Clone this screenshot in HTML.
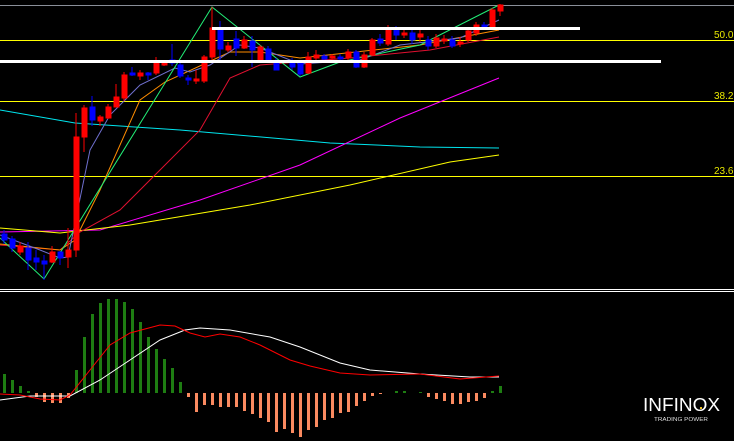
<!DOCTYPE html>
<html><head><meta charset="utf-8"><style>
html,body{margin:0;padding:0;background:#000;width:734px;height:441px;overflow:hidden}
svg{display:block}
</style></head><body>
<svg width="734" height="441" viewBox="0 0 734 441" xmlns="http://www.w3.org/2000/svg" shape-rendering="crispEdges">
<rect width="734" height="441" fill="#000"/>
<line x1="0" y1="5.5" x2="734" y2="5.5" stroke="#8a8f99" stroke-width="1"/>
<!-- fib lines -->
<g stroke="#ffff00" stroke-width="1">
<line x1="0" y1="40.5" x2="734" y2="40.5"/>
<line x1="0" y1="101.5" x2="734" y2="101.5"/>
<line x1="0" y1="176.5" x2="734" y2="176.5"/>
</g>
<g fill="#e8e800" font-family="Liberation Sans, sans-serif" font-size="10">
<text x="714" y="38">50.0</text>
<text x="714" y="99">38.2</text>
<text x="714" y="174">23.6</text>
</g>
<!-- MAs -->
<g fill="none" stroke-width="1" shape-rendering="auto">
<polyline stroke="#00e5ee" points="0,110 75,123 180,130 330,143 420,147 499,148"/>
<polyline stroke="#ff00ff" points="0,232 100,230 200,200 300,165 400,118 499,78"/>
<polyline stroke="#ffff00" points="0,228 60,233 130,225 250,205 350,185 450,162 499,155"/>
<polyline stroke="#e01030" points="0,245 60,250 80,232 120,210 160,170 200,130 230,78 260,65 350,58 430,50 499,37"/>
<polyline stroke="#ff8c00" points="0,244 60,250 75,240 100,190 140,100 165,82 230,52 260,52 300,58 420,45 499,30"/>
<polyline stroke="#7070d0" points="0,235 40,250 60,258 68,257 90,150 110,115 140,85 175,68 190,72 210,65 240,45 260,48 300,64 360,60 400,45 460,38 499,20"/>
<polyline stroke="#22ee77" points="0,238 44,279 212,7 300,77 340,62 420,45 499,5"/>
</g>
<!-- candles -->
<g stroke-width="1">
<g stroke="#0000ff" fill="#0000ff">
<line x1="4" y1="230" x2="4" y2="244"/><rect x="2" y="234" width="5" height="6"/>
<line x1="12" y1="236" x2="12" y2="252"/><rect x="10" y="239" width="5" height="9"/>
<line x1="28" y1="242" x2="28" y2="270"/><rect x="26" y="248" width="5" height="12"/>
<line x1="36" y1="250" x2="36" y2="270"/><rect x="34" y="258" width="5" height="4"/>
<line x1="44" y1="255" x2="44" y2="280"/><rect x="42" y="261" width="5" height="3"/>
<line x1="60" y1="251" x2="60" y2="265"/><rect x="58" y="252" width="5" height="6"/>
<line x1="92" y1="96" x2="92" y2="126"/><rect x="90" y="107" width="5" height="13"/>
<line x1="132" y1="67" x2="132" y2="76"/><rect x="130" y="73" width="5" height="2"/>
<line x1="148" y1="72" x2="148" y2="80"/><rect x="146" y="73" width="5" height="2"/>
<line x1="172" y1="44" x2="172" y2="66"/><rect x="170" y="60" width="5" height="3"/>
<line x1="180" y1="62" x2="180" y2="78"/><rect x="178" y="65" width="5" height="11"/>
<line x1="188" y1="75" x2="188" y2="85"/><rect x="186" y="78" width="5" height="2"/>
<line x1="220" y1="21" x2="220" y2="60"/><rect x="218" y="29" width="5" height="20"/>
<line x1="236" y1="31" x2="236" y2="56"/><rect x="234" y="39" width="5" height="9"/>
<line x1="252" y1="36" x2="252" y2="67"/><rect x="250" y="41" width="5" height="9"/>
<line x1="268" y1="46" x2="268" y2="62"/><rect x="266" y="49" width="5" height="11"/>
<line x1="276" y1="58" x2="276" y2="70"/><rect x="274" y="62" width="5" height="8"/>
<line x1="292" y1="58" x2="292" y2="70"/><rect x="290" y="62" width="5" height="5"/>
<line x1="300" y1="60" x2="300" y2="76"/><rect x="298" y="63" width="5" height="11"/>
<line x1="324" y1="54" x2="324" y2="62"/><rect x="322" y="56" width="5" height="3"/>
<line x1="340" y1="54" x2="340" y2="62"/><rect x="338" y="57" width="5" height="2"/>
<line x1="356" y1="50" x2="356" y2="68"/><rect x="354" y="52" width="5" height="15"/>
<line x1="380" y1="34" x2="380" y2="46"/><rect x="378" y="39" width="5" height="4"/>
<line x1="396" y1="26" x2="396" y2="40"/><rect x="394" y="30" width="5" height="5"/>
<line x1="412" y1="28" x2="412" y2="44"/><rect x="410" y="33" width="5" height="7"/>
<line x1="428" y1="36" x2="428" y2="50"/><rect x="426" y="40" width="5" height="6"/>
<line x1="452" y1="36" x2="452" y2="48"/><rect x="450" y="40" width="5" height="6"/>
<line x1="484" y1="22" x2="484" y2="30"/><rect x="482" y="25" width="5" height="3"/>
</g>
<g stroke="#ff0000" fill="#ff0000">
<line x1="20" y1="242" x2="20" y2="255"/><rect x="18" y="246" width="5" height="6"/>
<line x1="52" y1="246" x2="52" y2="263"/><rect x="50" y="252" width="5" height="10"/>
<line x1="68" y1="228" x2="68" y2="268"/><rect x="66" y="250" width="5" height="7"/>
<line x1="76" y1="113" x2="76" y2="257"/><rect x="74" y="137" width="5" height="113"/>
<line x1="84" y1="105" x2="84" y2="152"/><rect x="82" y="108" width="5" height="29"/>
<line x1="100" y1="115" x2="100" y2="126"/><rect x="98" y="117" width="5" height="4"/>
<line x1="108" y1="104" x2="108" y2="119"/><rect x="106" y="107" width="5" height="11"/>
<line x1="116" y1="84" x2="116" y2="101"/><rect x="114" y="97" width="5" height="10"/>
<line x1="124" y1="72" x2="124" y2="101"/><rect x="122" y="75" width="5" height="23"/>
<line x1="140" y1="70" x2="140" y2="80"/><rect x="138" y="73" width="5" height="3"/>
<line x1="156" y1="57" x2="156" y2="75"/><rect x="154" y="63" width="5" height="10"/>
<line x1="164" y1="60" x2="164" y2="66"/><rect x="162" y="62" width="5" height="3"/>
<line x1="196" y1="70" x2="196" y2="84"/><rect x="194" y="79" width="5" height="2"/>
<line x1="204" y1="55" x2="204" y2="83"/><rect x="202" y="57" width="5" height="24"/>
<line x1="212" y1="7" x2="212" y2="60"/><rect x="210" y="28" width="5" height="29"/>
<line x1="228" y1="42" x2="228" y2="52"/><rect x="226" y="46" width="5" height="4"/>
<line x1="244" y1="36" x2="244" y2="49"/><rect x="242" y="40" width="5" height="8"/>
<line x1="260" y1="45" x2="260" y2="62"/><rect x="258" y="47" width="5" height="13"/>
<line x1="308" y1="52" x2="308" y2="74"/><rect x="306" y="57" width="5" height="16"/>
<line x1="316" y1="50" x2="316" y2="60"/><rect x="314" y="55" width="5" height="3"/>
<line x1="332" y1="54" x2="332" y2="60"/><rect x="330" y="56" width="5" height="2"/>
<line x1="348" y1="49" x2="348" y2="60"/><rect x="346" y="52" width="5" height="6"/>
<line x1="364" y1="52" x2="364" y2="68"/><rect x="362" y="55" width="5" height="12"/>
<line x1="372" y1="38" x2="372" y2="56"/><rect x="370" y="40" width="5" height="15"/>
<line x1="388" y1="25" x2="388" y2="46"/><rect x="386" y="30" width="5" height="14"/>
<line x1="404" y1="30" x2="404" y2="38"/><rect x="402" y="33" width="5" height="2"/>
<line x1="420" y1="30" x2="420" y2="42"/><rect x="418" y="34" width="5" height="3"/>
<line x1="436" y1="34" x2="436" y2="48"/><rect x="434" y="38" width="5" height="8"/>
<line x1="444" y1="35" x2="444" y2="44"/><rect x="442" y="39" width="5" height="2"/>
<line x1="460" y1="37" x2="460" y2="47"/><rect x="458" y="42" width="5" height="2"/>
<line x1="468" y1="28" x2="468" y2="42"/><rect x="466" y="31" width="5" height="9"/>
<line x1="476" y1="22" x2="476" y2="36"/><rect x="474" y="25" width="5" height="8"/>
<line x1="492" y1="8" x2="492" y2="28"/><rect x="490" y="10" width="5" height="17"/>
<line x1="500" y1="4" x2="500" y2="16"/><rect x="498" y="5" width="5" height="6"/>
</g>
</g>
<!-- white horizontal lines -->
<rect x="212" y="27" width="368" height="3" fill="#fff"/>
<rect x="0" y="60" width="661" height="3" fill="#fff"/>
<!-- separator -->
<line x1="0" y1="289.5" x2="734" y2="289.5" stroke="#fff"/>
<line x1="0" y1="291.5" x2="734" y2="291.5" stroke="#fff"/>
<!-- MACD histogram -->
<g fill="#1e7d12">
<rect x="3" y="374" width="3" height="19"/><rect x="11" y="380" width="3" height="13"/><rect x="19" y="386" width="3" height="7"/><rect x="27" y="391" width="3" height="2"/>
<rect x="75" y="370" width="3" height="23"/><rect x="83" y="337" width="3" height="56"/><rect x="91" y="314" width="3" height="79"/><rect x="99" y="303" width="3" height="90"/><rect x="107" y="299" width="3" height="94"/><rect x="115" y="299" width="3" height="94"/><rect x="123" y="302" width="3" height="91"/><rect x="131" y="309" width="3" height="84"/><rect x="139" y="322" width="3" height="71"/><rect x="147" y="337" width="3" height="56"/><rect x="155" y="349" width="3" height="44"/><rect x="163" y="359" width="3" height="34"/><rect x="171" y="368" width="3" height="25"/><rect x="179" y="382" width="3" height="11"/>
<rect x="395" y="391" width="3" height="2"/><rect x="403" y="391" width="3" height="2"/><rect x="419" y="392" width="3" height="1"/>
<rect x="491" y="391" width="3" height="2"/><rect x="499" y="386" width="3" height="7"/>
</g>
<g fill="#fa8a60">
<rect x="35" y="393" width="3" height="4"/><rect x="43" y="393" width="3" height="9"/><rect x="51" y="393" width="3" height="10"/><rect x="59" y="393" width="3" height="10"/><rect x="67" y="393" width="3" height="5"/>
<rect x="187" y="393" width="3" height="4"/><rect x="195" y="393" width="3" height="19"/><rect x="203" y="393" width="3" height="12"/><rect x="211" y="393" width="3" height="12"/><rect x="219" y="393" width="3" height="14"/><rect x="227" y="393" width="3" height="14"/><rect x="235" y="393" width="3" height="14"/><rect x="243" y="393" width="3" height="18"/><rect x="251" y="393" width="3" height="21"/><rect x="259" y="393" width="3" height="25"/><rect x="267" y="393" width="3" height="29"/><rect x="275" y="393" width="3" height="39"/><rect x="283" y="393" width="3" height="36"/><rect x="291" y="393" width="3" height="40"/><rect x="299" y="393" width="3" height="44"/><rect x="307" y="393" width="3" height="37"/><rect x="315" y="393" width="3" height="34"/><rect x="323" y="393" width="3" height="27"/><rect x="331" y="393" width="3" height="25"/><rect x="339" y="393" width="3" height="20"/><rect x="347" y="393" width="3" height="19"/><rect x="355" y="393" width="3" height="13"/><rect x="363" y="393" width="3" height="8"/><rect x="371" y="393" width="3" height="3"/><rect x="379" y="393" width="3" height="1"/>
<rect x="427" y="393" width="3" height="4"/><rect x="435" y="393" width="3" height="6"/><rect x="443" y="393" width="3" height="8"/><rect x="451" y="393" width="3" height="11"/><rect x="459" y="393" width="3" height="11"/><rect x="467" y="393" width="3" height="9"/><rect x="475" y="393" width="3" height="8"/><rect x="483" y="393" width="3" height="5"/>
</g>
<g fill="none" stroke-width="1" shape-rendering="auto">
<polyline stroke="#ffffff" points="0,400 30,396 70,396 100,380 130,360 160,340 185,330 200,328 230,330 270,337 300,347 340,363 370,370 420,374 470,377 499,377"/>
<polyline stroke="#ff0000" points="0,394 20,395 40,399 60,400 70,395 90,370 110,345 130,333 160,325 175,326 190,333 205,337 220,334 240,337 260,345 290,360 310,366 340,373 370,375 420,374 460,379 499,376"/>
</g>
<!-- logo -->
<text x="643" y="411" fill="#fff" font-family="Liberation Sans, sans-serif" font-size="18.5" textLength="77" lengthAdjust="spacingAndGlyphs">INFINOX</text>
<text x="654" y="421" fill="#ddd" font-family="Liberation Sans, sans-serif" font-size="5.5" textLength="54" lengthAdjust="spacingAndGlyphs">TRADING POWER</text>
<rect x="700" y="407" width="2" height="2" fill="#f0c020"/>
</svg>
</body></html>
